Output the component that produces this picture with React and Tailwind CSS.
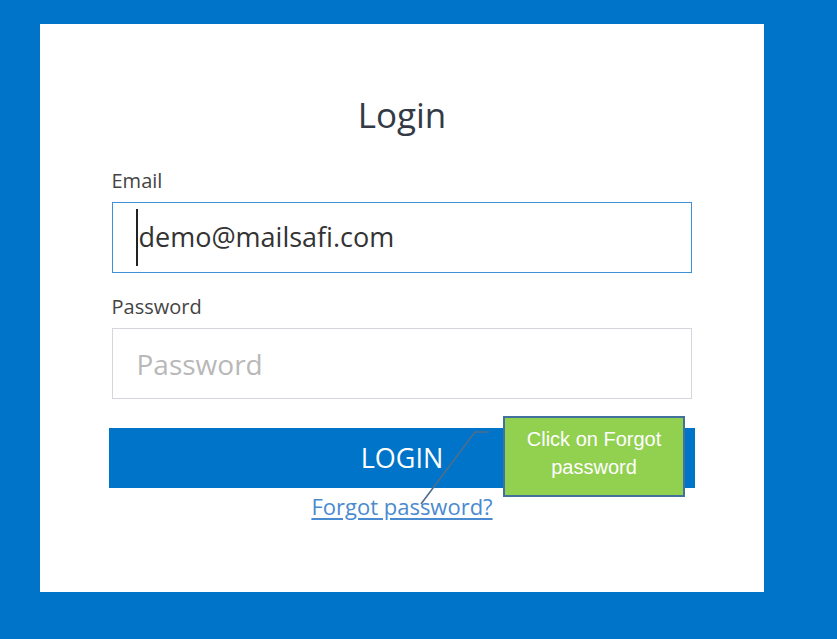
export default function App() {
  return (
    <div className="min-h-screen w-full bg-[#0074c8] pl-[40px] pt-[24px]" style={{ height: 639 }}>
      <div className="relative flex h-[568px] w-[724px] flex-col items-center bg-white pt-[70px] font-['Open_Sans',sans-serif]">
        <h1 className="text-[35px] leading-[42px] font-normal text-[#333a45]">Login</h1>

        <div className="mt-[33px] w-[585px] pl-[2px] pr-[3px]">
          <label className="block text-[20px] leading-[24px] text-[#444]">Email</label>
          <div className="mt-[9px] flex h-[71px] items-center border-[length:1.5px] border-solid border-[#3d8fd8] pl-[23px]">
            <span className="mr-[1px] h-[57px] w-[2px] bg-[#222]" />
            <span className="text-[27px] text-[#333]">demo@mailsafi.com</span>
          </div>

          <label className="mt-[22px] block text-[20px] leading-[24px] text-[#444]">Password</label>
          <div className="mt-[9px] flex h-[71px] items-center border border-[#d3d6da] pl-[24px]">
            <span className="text-[28px] text-[#b8b8b8]">Password</span>
          </div>
        </div>

        <button className="mt-[29px] flex h-[60px] w-[586px] items-center justify-center bg-[#0074c8] text-[27px] text-white">
          LOGIN
        </button>

        <a href="#" className="mt-[5px] text-[22px] leading-[26px] text-[#4a8ad0] underline underline-offset-[3px]">
          Forgot password?
        </a>

        <svg className="absolute left-0 top-0" width="724" height="568">
          <polyline points="381,480 435,408 449,408" fill="none" stroke="#4f6d8c" strokeWidth="1.6" />
        </svg>

        <div className="absolute left-[463px] top-[392px] flex h-[81px] w-[182px] items-center justify-center border-2 border-[#41719c] bg-[#92d050] pb-[7px] text-center font-['Liberation_Sans',sans-serif] text-[20px] leading-[28px] text-white">
          Click on Forgot
          <br />
          password
        </div>
      </div>
    </div>
  );
}
